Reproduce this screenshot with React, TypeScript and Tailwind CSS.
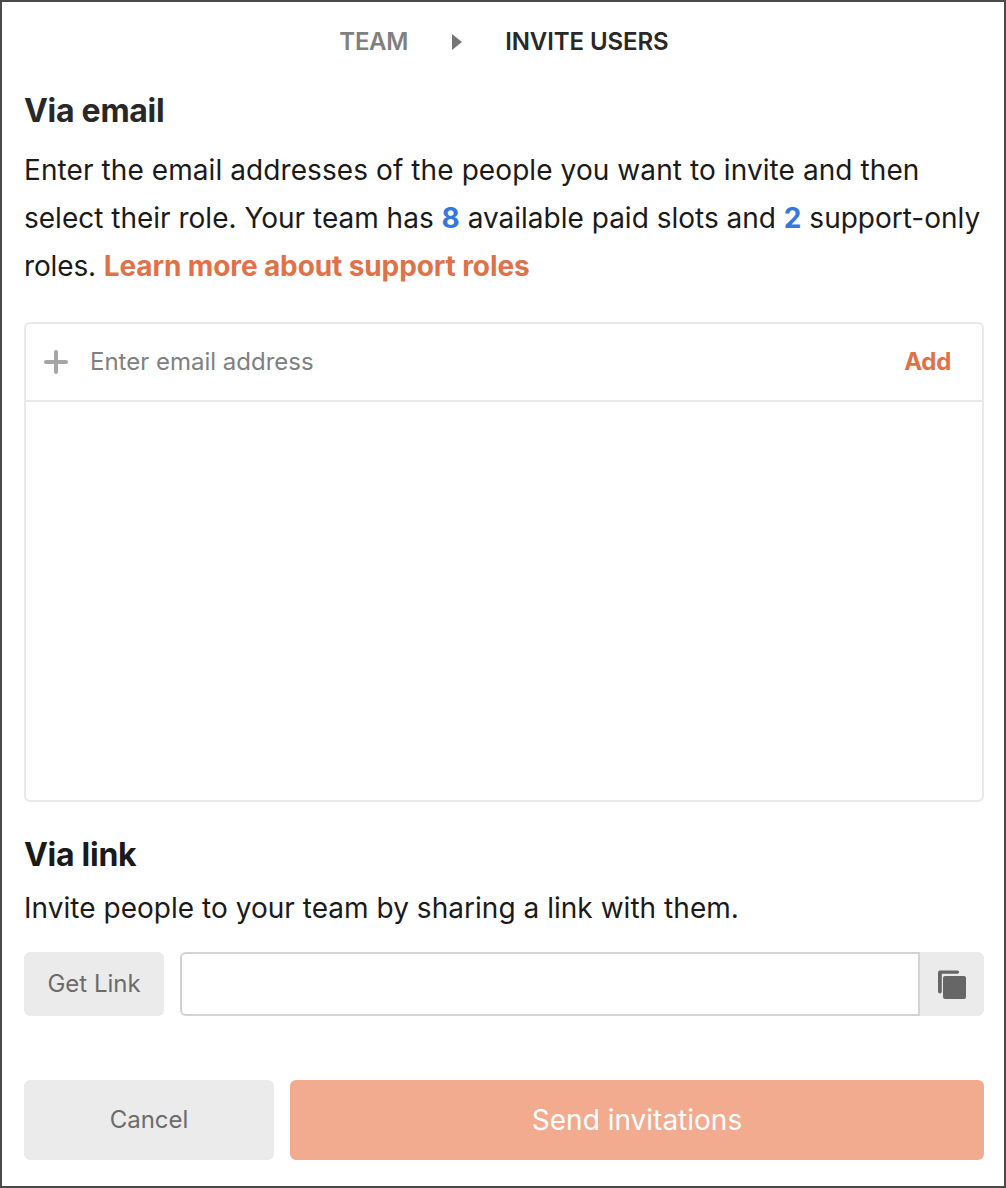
import React from "react";

export default function App() {
  return (
    <main className="flex h-[1188px] w-[1006px] flex-col border-2 border-[#4a4a4a] bg-white pr-[20px] pl-[22px] font-['Inter',sans-serif] text-[#1a1a1a]">
      <nav className="flex h-[80px] items-center justify-center text-[24px] leading-[30px]">
        <span className="font-semibold tracking-[-0.3px] text-[#808080]">TEAM</span>
        <svg className="mr-[43px] ml-[44px]" width="10" height="16" viewBox="0 0 10 16">
          <path d="M0 0L10 8L0 16Z" fill="#757575" />
        </svg>
        <span className="font-semibold tracking-[-0.08px] text-[#282828]">INVITE USERS</span>
      </nav>
      <h1 className="mt-[7px] text-[32px] leading-[44px] font-bold tracking-[-0.28px] text-[#282828]">Via email</h1>
      <p className="mt-[13px] text-[28px] leading-[48px] whitespace-nowrap">
        <span className="tracking-[0.085px]">Enter the email addresses of the people you want to invite and then</span>
        <br />
        select their role. Your team has <b className="font-bold text-[#3577e0]">8</b> available paid slots and <b className="font-bold text-[#3577e0]">2</b> support-only
        <br />
        <span className="tracking-[-0.14px]">roles. </span>
        <a className="font-bold tracking-[-0.11px] text-[#df7248]">Learn more about support roles</a>
      </p>
      <section className="mt-[32px] flex h-[480px] flex-none flex-col rounded-[6px] border-2 border-[#e9e9e9]">
        <div className="flex h-[78px] items-center border-b-2 border-[#e9e9e9] pr-[31px] pl-[18px] text-[24px]">
          <svg width="24" height="24" viewBox="0 0 24 24">
            <path d="M12 2V22M2 12H22" stroke="#a6a6a6" strokeWidth="4" strokeLinecap="round" />
          </svg>
          <span className="ml-[22px] flex-1 text-[#808080]">Enter email address</span>
          <button className="font-bold tracking-[-0.3px] text-[#df7248]">Add</button>
        </div>
      </section>
      <h2 className="mt-[31px] text-[32px] leading-[44px] font-bold tracking-[-0.28px]">Via link</h2>
      <p className="mt-[7px] text-[28px] leading-[48px] tracking-[0.03px]">Invite people to your team by sharing a link with them.</p>
      <div className="mt-[20px] flex h-[64px] flex-none">
        <button className="w-[140px] rounded-[6px] bg-[#ebebeb] text-[24px] text-[#6b6b6b]">Get Link</button>
        <div className="ml-[16px] flex-1 rounded-l-[6px] border-2 border-[#d3d3d3]" />
        <button className="flex w-[64px] justify-start rounded-r-[6px] bg-[#ebebeb] pt-[18px] pl-[18px]">
          <svg width="28" height="29" viewBox="0 0 28 29" fill="#666666">
            <path d="M2 0.5H19.5A1.6 1.6 0 0 1 19.5 3.7H3.8V21.5A1.8 1.8 0 0 1 0 21.5V2.5A2 2 0 0 1 2 0.5Z" />
            <rect x="5" y="6" width="23" height="23" rx="2" />
          </svg>
        </button>
      </div>
      <footer className="mt-[64px] flex h-[80px] flex-none gap-[16px]">
        <button className="w-[250px] rounded-[6px] bg-[#ebebeb] text-[24px] text-[#6b6b6b]">Cancel</button>
        <button className="flex-1 rounded-[6px] bg-[#f3ab90] text-[28px] text-white">Send invitations</button>
      </footer>
    </main>
  );
}
